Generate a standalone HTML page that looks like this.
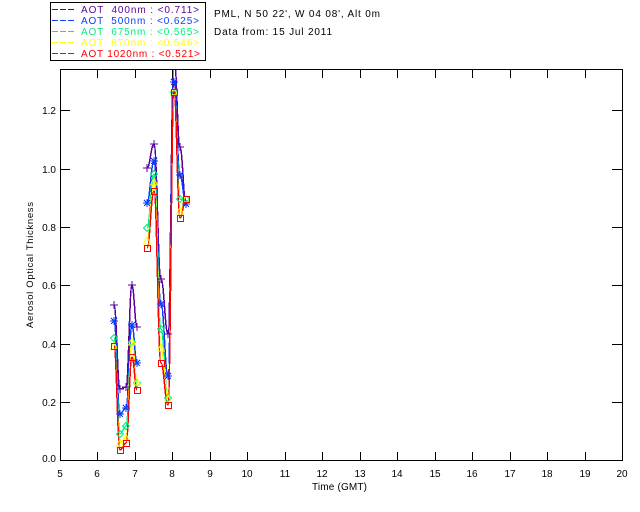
<!DOCTYPE html>
<html><head><meta charset="utf-8"><title>AOT</title>
<style>
html,body{margin:0;padding:0;background:#fff;width:640px;height:512px;overflow:hidden}
svg{display:block}
text{font-family:"Liberation Sans",sans-serif;font-size:10px}
</style></head><body>
<svg width="640" height="512" viewBox="0 0 640 512" xmlns="http://www.w3.org/2000/svg">
<defs>
<clipPath id="c"><rect x="60" y="69" width="563" height="392"/></clipPath>
<path id="mp" d="M-4 0H4M0-4V4" fill="none"/>
<path id="mb" d="M-4 0H4M0-4V4M-3-3L3 3M-3 3L3-3" fill="none"/>
<path id="mg" d="M0-3.5L3.5 0L0 3.5L-3.5 0Z" fill="none"/>
<path id="my" d="M0-4L3.5 3H-3.5Z" fill="none"/>
<rect id="mr" x="-3" y="-3" width="6" height="6" fill="none"/>
</defs>
<rect width="640" height="512" fill="#fff"/>

<g clip-path="url(#c)" shape-rendering="crispEdges" fill="none" stroke-width="1.5">
<g stroke="#5a00a0">
<path d="M114 305C116.5 305 117.5 389 120 389C122.5 389 123.5 387 126 387C128.5 387 129.5 285 132 285C134 285 135 327 137 327"/>
<path d="M147 168C150 168 151 144 154 144C157 144 158 279 161 279C164 279 165 334 168 334C170.5 334 171.5 55 174 55C176.5 55 177.5 147 180 147C182.5 147 183.5 204 186 204"/>
</g>
<g stroke="#0a3cff">
<path d="M114 321C116.5 321 117.5 414 120 414C122.5 414 123.5 408 126 408C128.5 408 129.5 325 132 325C134 325 135 363 137 363"/>
<path d="M147 203C150 203 151 161 154 161C157 161 158 304 161 304C164 304 165 376 168 376C170.5 376 171.5 82 174 82C176.5 82 177.5 175 180 175C182.5 175 183.5 204 186 204"/>
</g>
<g stroke="#00f080">
<path d="M114 338C116.5 338 117.5 434 120 434C122.5 434 123.5 426 126 426C128.5 426 129.5 342 132 342C134 342 135 383 137 383"/>
<path d="M147 228C150 228 151 174 154 174C157 174 158 329 161 329C164 329 165 398 168 398C170.5 398 171.5 92 174 92C176.5 92 177.5 199 180 199C182.5 199 183.5 199 186 199"/>
</g>
<g stroke="#ffff00">
<path d="M114 346C116.5 346 117.5 443 120 443C122.5 443 123.5 438 126 438C128.5 438 129.5 342 132 342C134 342 135 382 137 382"/>
<path d="M147 241C150 241 151 182 154 182C157 182 158 348 161 348C164 348 165 399 168 399C170.5 399 171.5 92 174 92C176.5 92 177.5 211 180 211C182.5 211 183.5 199 186 199"/>
</g>
<g stroke="#ff0000">
<path d="M114 346C116.5 346 117.5 450 120 450C122.5 450 123.5 443 126 443C128.5 443 129.5 357 132 357C134 357 135 390 137 390"/>
<path d="M147 248C150 248 151 191 154 191C157 191 158 363 161 363C164 363 165 405 168 405C170.5 405 171.5 92 174 92C176.5 92 177.5 218 180 218C182.5 218 183.5 199 186 199"/>
</g>
</g>

<g clip-path="url(#c)" shape-rendering="crispEdges" stroke-width="1">
<g stroke="#5a00a0">
<use href="#mp" x="114" y="305"/><use href="#mp" x="120" y="389"/><use href="#mp" x="126" y="387"/><use href="#mp" x="132" y="285"/><use href="#mp" x="137" y="327"/>
<use href="#mp" x="147" y="168"/><use href="#mp" x="154" y="144"/><use href="#mp" x="161" y="279"/><use href="#mp" x="168" y="334"/><use href="#mp" x="180" y="147"/><use href="#mp" x="186" y="204"/>
</g>
<g stroke="#0a3cff">
<use href="#mb" x="114" y="321"/><use href="#mb" x="120" y="414"/><use href="#mb" x="126" y="408"/><use href="#mb" x="132" y="325"/><use href="#mb" x="137" y="363"/>
<use href="#mb" x="147" y="203"/><use href="#mb" x="154" y="161"/><use href="#mb" x="161" y="304"/><use href="#mb" x="168" y="376"/><use href="#mb" x="174" y="82"/><use href="#mb" x="180" y="175"/><use href="#mb" x="186" y="204"/>
</g>
<g stroke="#00f080">
<use href="#mg" x="114" y="338"/><use href="#mg" x="120" y="434"/><use href="#mg" x="126" y="426"/><use href="#mg" x="132" y="342"/><use href="#mg" x="137" y="383"/>
<use href="#mg" x="147" y="228"/><use href="#mg" x="154" y="174"/><use href="#mg" x="161" y="329"/><use href="#mg" x="168" y="398"/><use href="#mg" x="174" y="92"/><use href="#mg" x="180" y="199"/><use href="#mg" x="186" y="199"/>
</g>
<g stroke="#ffff00">
<use href="#my" x="114" y="346"/><use href="#my" x="120" y="443"/><use href="#my" x="126" y="438"/><use href="#my" x="132" y="342"/><use href="#my" x="137" y="382"/>
<use href="#my" x="147" y="241"/><use href="#my" x="154" y="182"/><use href="#my" x="161" y="348"/><use href="#my" x="168" y="399"/><use href="#my" x="174" y="92"/><use href="#my" x="180" y="211"/><use href="#my" x="186" y="199"/>
</g>
<g stroke="#ff0000">
<use href="#mr" x="114.5" y="346.5"/><use href="#mr" x="120.5" y="450.5"/><use href="#mr" x="126.5" y="443.5"/><use href="#mr" x="132.5" y="357.5"/><use href="#mr" x="137.5" y="390.5"/>
<use href="#mr" x="147.5" y="248.5"/><use href="#mr" x="154.5" y="191.5"/><use href="#mr" x="161.5" y="363.5"/><use href="#mr" x="168.5" y="405.5"/><use href="#mr" x="174.5" y="92.5"/><use href="#mr" x="180.5" y="218.5"/><use href="#mr" x="186.5" y="199.5"/>
</g>
</g>

<g shape-rendering="crispEdges" fill="none" stroke="#000" stroke-width="1">
<path d="M60.5 69.5H622.5V460.5H60.5Z"/>
<path d="M97.5 460V452M135.5 460V452M172.5 460V452M210.5 460V452M247.5 460V452M285.5 460V452M322.5 460V452M360.5 460V452M397.5 460V452M435.5 460V452M472.5 460V452M510.5 460V452M547.5 460V452M585.5 460V452"/>
<path d="M97.5 70V78M135.5 70V78M172.5 70V78M210.5 70V78M247.5 70V78M285.5 70V78M322.5 70V78M360.5 70V78M397.5 70V78M435.5 70V78M472.5 70V78M510.5 70V78M547.5 70V78M585.5 70V78"/>
<path d="M61 402.5H70M61 344.5H70M61 285.5H70M61 227.5H70M61 169.5H70M61 110.5H70"/>
<path d="M622 402.5H612M622 344.5H612M622 285.5H612M622 227.5H612M622 169.5H612M622 110.5H612"/>
<rect x="50.5" y="2.5" width="155" height="58"/>
</g>

<g shape-rendering="crispEdges" stroke-width="1" fill="none">
<path d="M52 9.5H75" stroke="#5a00a0" stroke-dasharray="6 2"/>
<path d="M52 20.5H75" stroke="#0a3cff" stroke-dasharray="6 2"/>
<path d="M52 31.5H75" stroke="#00f080" stroke-dasharray="6 2"/>
<path d="M52 42.5H75" stroke="#ffff00" stroke-dasharray="6 2"/>
<path d="M52 53.5H75" stroke="#ff0000" stroke-dasharray="6 2"/>
</g>

<text x="81" y="13" fill="#5a00a0" textLength="118" lengthAdjust="spacing" xml:space="preserve">AOT  400nm : &lt;0.711&gt;</text>
<text x="81" y="24" fill="#0a3cff" textLength="118" lengthAdjust="spacing" xml:space="preserve">AOT  500nm : &lt;0.625&gt;</text>
<text x="81" y="35" fill="#00f080" textLength="118" lengthAdjust="spacing" xml:space="preserve">AOT  675nm : &lt;0.565&gt;</text>
<text x="81" y="46" fill="#ffff00" textLength="118" lengthAdjust="spacing" xml:space="preserve">AOT  870nm : &lt;0.546&gt;</text>
<text x="81" y="57" fill="#ff0000" textLength="119" lengthAdjust="spacing" xml:space="preserve">AOT 1020nm : &lt;0.521&gt;</text>

<text x="214" y="17" textLength="166" lengthAdjust="spacing">PML, N 50 22', W 04 08', Alt 0m</text>
<text x="214" y="35" textLength="118" lengthAdjust="spacing">Data from: 15 Jul 2011</text>

<g text-anchor="end">
<text x="56" y="462">0.0</text>
<text x="56" y="406">0.2</text>
<text x="56" y="348">0.4</text>
<text x="56" y="289">0.6</text>
<text x="56" y="231">0.8</text>
<text x="56" y="173">1.0</text>
<text x="56" y="114">1.2</text>
</g>
<g text-anchor="middle">
<text x="60" y="477">5</text><text x="97" y="477">6</text><text x="135" y="477">7</text><text x="172" y="477">8</text><text x="210" y="477">9</text>
<text x="247" y="477">10</text><text x="285" y="477">11</text><text x="322" y="477">12</text><text x="360" y="477">13</text><text x="397" y="477">14</text>
<text x="435" y="477">15</text><text x="472" y="477">16</text><text x="510" y="477">17</text><text x="547" y="477">18</text><text x="585" y="477">19</text><text x="622" y="477">20</text>
</g>
<text x="312" y="490" textLength="55" lengthAdjust="spacing">Time (GMT)</text>
<text transform="translate(33 328) rotate(-90)" style="font-size:9.5px" textLength="126" lengthAdjust="spacing">Aerosol Optical Thickness</text>
</svg>
</body></html>
